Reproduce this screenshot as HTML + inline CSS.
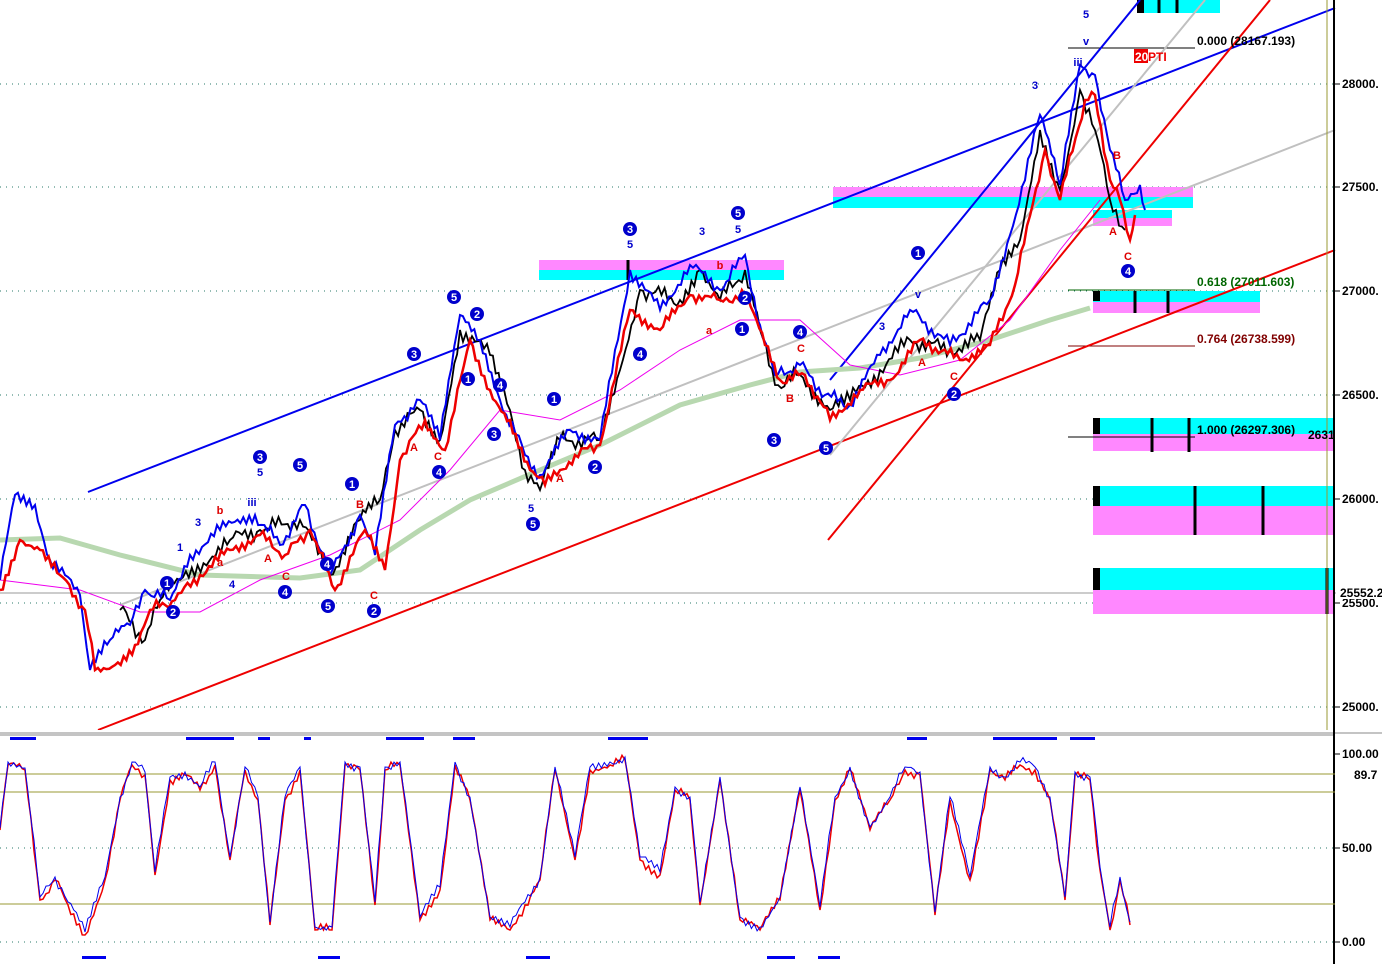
<!DOCTYPE html>
<html><head><meta charset="utf-8"><style>
html,body{margin:0;padding:0;background:#fff;width:1382px;height:964px;overflow:hidden}
svg{display:block;font-family:"Liberation Sans",sans-serif}
</style></head><body>
<svg id="s" width="1382" height="964" viewBox="0 0 1382 964" xmlns="http://www.w3.org/2000/svg">
<rect width="1382" height="964" fill="#fff"/>
<g stroke="#2a7a6a" stroke-width="1" stroke-dasharray="1,5">
<line x1="0" y1="84" x2="1335" y2="84"/><line x1="0" y1="187" x2="1335" y2="187"/>
<line x1="0" y1="291" x2="1335" y2="291"/><line x1="0" y1="395" x2="1335" y2="395"/>
<line x1="0" y1="499" x2="1335" y2="499"/><line x1="0" y1="603" x2="1335" y2="603"/>
<line x1="0" y1="707" x2="1335" y2="707"/>
<line x1="0" y1="848" x2="1335" y2="848"/><line x1="0" y1="942" x2="1335" y2="942"/>
</g>
<line x1="0" y1="593" x2="1382" y2="593" stroke="#999"/>
<rect x="833" y="187" width="360" height="10" fill="#ff88ff"/><rect x="833" y="197" width="360" height="11" fill="#00ffff"/>
<rect x="539" y="260" width="245" height="10" fill="#ff88ff"/><rect x="539" y="270" width="245" height="10" fill="#00ffff"/>
<rect x="1093" y="210" width="79" height="8" fill="#00ffff"/><rect x="1093" y="218" width="79" height="8" fill="#ff88ff"/>
<rect x="1093" y="291" width="167" height="11" fill="#00ffff"/><rect x="1093" y="302" width="167" height="11" fill="#ff88ff"/>
<rect x="1093" y="418" width="242" height="16" fill="#00ffff"/><rect x="1093" y="434" width="242" height="17" fill="#ff88ff"/>
<rect x="1093" y="486" width="242" height="20" fill="#00ffff"/><rect x="1093" y="506" width="242" height="29" fill="#ff88ff"/>
<rect x="1093" y="568" width="242" height="22" fill="#00ffff"/><rect x="1093" y="590" width="242" height="24" fill="#ff88ff"/>
<rect x="1137" y="0" width="83" height="13" fill="#00ffff"/>
<g fill="#000"><rect x="1093" y="418" width="7" height="16"/><rect x="1093" y="486" width="7" height="20"/><rect x="1093" y="568" width="7" height="22"/><rect x="1093" y="291" width="7" height="10"/><rect x="1137" y="0" width="7" height="13"/></g>
<g stroke="#000" stroke-width="3"><line x1="1152" y1="418" x2="1152" y2="452"/><line x1="1189" y1="418" x2="1189" y2="452"/><line x1="1195" y1="486" x2="1195" y2="535"/><line x1="1263" y1="486" x2="1263" y2="535"/><line x1="1135" y1="291" x2="1135" y2="313"/><line x1="1168" y1="291" x2="1168" y2="313"/><line x1="1327" y1="568" x2="1327" y2="614"/><line x1="628" y1="260" x2="628" y2="280"/><line x1="1159" y1="0" x2="1159" y2="13"/><line x1="1177" y1="0" x2="1177" y2="13"/></g>
<line x1="1068" y1="48" x2="1195" y2="48" stroke="#000"/>
<line x1="1068" y1="290" x2="1195" y2="290" stroke="#006600"/>
<line x1="1068" y1="346" x2="1195" y2="346" stroke="#800000"/>
<line x1="1068" y1="437" x2="1195" y2="437" stroke="#000"/>
<line x1="88" y1="492" x2="1335" y2="8" stroke="#0000ee" stroke-width="2"/>
<line x1="98" y1="730" x2="1335" y2="250" stroke="#ee0000" stroke-width="2"/>
<line x1="120" y1="605" x2="1335" y2="130" stroke="#c0c0c0" stroke-width="2"/>
<line x1="828" y1="540" x2="1270" y2="0" stroke="#ee0000" stroke-width="2"/>
<line x1="830" y1="380" x2="1140" y2="0" stroke="#0000ee" stroke-width="2"/>
<line x1="830" y1="455" x2="1205" y2="0" stroke="#c0c0c0" stroke-width="2"/>
<polyline fill="none" stroke="#b8d8b0" stroke-width="5" points="0,540 60,538 120,555 200,575 300,578 360,570 420,530 470,500 540,470 600,445 680,405 750,385 800,372 860,368 920,358 990,340 1050,320 1090,308"/>
<polyline fill="none" stroke="#ee00ee" stroke-width="1" points="0,580 80,590 140,612 200,612 260,580 330,555 400,520 450,470 500,410 560,420 620,390 680,350 740,320 800,320 850,365 900,375 960,360 1010,320 1060,250 1100,200"/>
<polyline class="j" data-a="10" fill="none" stroke="#000" stroke-width="1.8" points="120,610 145,640 160,600 180,580 230,540 260,530 300,520 330,575 360,520 380,500 395,430 420,410 440,440 460,330 490,355 510,410 525,470 540,490 560,440 600,440 620,370 640,290 680,300 700,270 720,300 745,270 760,330 775,385 800,375 830,410 850,400 880,370 910,340 950,350 980,340 1000,270 1020,240 1040,130 1060,190 1080,90 1095,130 1110,200 1125,230"/>
<polyline class="j" data-a="8" fill="none" stroke="#0000ee" stroke-width="2" points="0,580 15,495 35,505 50,560 80,595 90,670 110,640 130,625 145,590 170,600 190,555 220,530 255,515 280,545 305,505 330,575 360,515 375,555 395,425 420,400 440,440 460,315 480,340 500,400 525,455 540,475 570,430 600,440 630,270 660,310 690,265 720,290 745,255 760,325 775,375 800,365 825,395 850,405 880,355 910,310 950,345 990,300 1010,235 1040,115 1060,185 1080,65 1095,75 1110,150 1125,200 1140,185 1145,210"/>
<polyline class="j" data-a="7" fill="none" stroke="#ee0000" stroke-width="2.5" points="0,590 20,540 40,550 60,575 85,610 95,670 115,665 135,645 150,610 175,600 200,575 230,550 260,535 285,555 310,530 335,590 365,530 385,570 400,460 425,420 445,450 470,340 490,390 510,420 530,470 545,485 575,455 600,445 630,310 660,330 690,295 720,300 745,295 765,345 780,380 805,375 830,420 860,390 890,380 920,340 960,360 990,345 1015,285 1045,150 1060,200 1085,100 1095,95 1110,180 1120,200 1130,240 1135,215"/>
<rect x="0" y="730" width="1335" height="4" fill="#fff"/>
<line x1="0" y1="733" x2="1382" y2="733" stroke="#888" stroke-width="1"/>
<line x1="0" y1="735" x2="1335" y2="735" stroke="#888"/>
<line x1="1334" y1="0" x2="1334" y2="964" stroke="#000" stroke-width="2"/>
<line x1="1327" y1="0" x2="1327" y2="730" stroke="#999933"/>
<g stroke="#999933"><line x1="0" y1="774" x2="1335" y2="774"/><line x1="0" y1="792" x2="1335" y2="792"/><line x1="0" y1="904" x2="1335" y2="904"/></g>
<polyline class="j" data-a="6" fill="none" stroke="#ee0000" stroke-width="1.5" points="0,830 8,765 25,770 40,900 55,880 68,905 85,935 105,880 120,800 132,765 145,775 155,875 170,780 185,775 200,790 215,765 230,860 245,770 258,800 270,925 285,800 300,770 315,930 332,930 345,765 360,770 375,905 385,770 400,765 420,920 440,890 455,765 470,800 490,920 510,930 525,905 540,880 555,770 575,860 590,770 610,765 625,760 640,860 660,875 675,790 690,800 700,905 720,780 740,920 760,930 780,900 800,790 820,910 835,800 850,770 870,830 890,800 905,770 920,775 935,915 950,800 970,880 990,770 1005,780 1020,765 1035,770 1050,800 1065,900 1075,775 1090,780 1100,870 1110,930 1120,880 1130,925"/>
<polyline class="j" data-a="6" fill="none" stroke="#0000ee" stroke-width="1" points="0,828 8,762 25,768 40,897 55,877 68,902 85,932 105,877 120,797 132,762 145,772 155,872 170,777 185,772 200,787 215,762 230,857 245,767 258,797 270,922 285,797 300,767 315,927 332,927 345,762 360,767 375,902 385,767 400,762 420,917 440,887 455,762 470,797 490,917 510,927 525,902 540,877 555,767 575,857 590,767 610,762 625,757 640,857 660,872 675,787 690,797 700,902 720,777 740,917 760,927 780,897 800,787 820,907 835,797 850,767 870,827 890,797 905,767 920,772 935,912 950,797 970,877 990,767 1005,777 1020,762 1035,767 1050,797 1065,897 1075,772 1090,777 1100,867 1110,927 1120,877 1130,922"/>
<g fill="#0000ee"><rect x="10" y="737" width="26" height="3"/><rect x="186" y="737" width="48" height="3"/><rect x="258" y="737" width="12" height="3"/><rect x="304" y="737" width="7" height="3"/><rect x="386" y="737" width="38" height="3"/><rect x="453" y="737" width="22" height="3"/><rect x="608" y="737" width="40" height="3"/><rect x="907" y="737" width="20" height="3"/><rect x="993" y="737" width="64" height="3"/><rect x="1070" y="737" width="25" height="3"/><rect x="82" y="956" width="24" height="3"/><rect x="318" y="956" width="22" height="3"/><rect x="526" y="956" width="24" height="3"/><rect x="767" y="956" width="28" height="3"/><rect x="818" y="956" width="22" height="3"/></g>
<g font-size="12" font-weight="bold" fill="#000">
<g stroke="#000"><line x1="1334" y1="84" x2="1340" y2="84"/><line x1="1334" y1="187" x2="1340" y2="187"/><line x1="1334" y1="291" x2="1340" y2="291"/><line x1="1334" y1="395" x2="1340" y2="395"/><line x1="1334" y1="499" x2="1340" y2="499"/><line x1="1334" y1="603" x2="1340" y2="603"/><line x1="1334" y1="707" x2="1340" y2="707"/><line x1="1334" y1="754" x2="1340" y2="754"/><line x1="1334" y1="848" x2="1340" y2="848"/><line x1="1334" y1="942" x2="1340" y2="942"/></g>
<text x="1342" y="88">28000.</text><text x="1342" y="191">27500.</text><text x="1342" y="295">27000.</text><text x="1342" y="399">26500.</text><text x="1342" y="503">26000.</text><text x="1342" y="607">25500.</text><text x="1342" y="711">25000.</text>
<text x="1342" y="758">100.00</text><text x="1342" y="852">50.00</text><text x="1342" y="946">0.00</text>
</g>
<rect x="1336" y="585" width="46" height="14" fill="#fff"/><text x="1340" y="597" font-size="12" font-weight="bold">25552.2</text>
<rect x="1336" y="767" width="46" height="14" fill="#fff"/><text x="1354" y="779" font-size="12" font-weight="bold">89.7</text>
<g font-size="12" font-weight="bold">
<text x="1197" y="45" fill="#000">0.000 (28167.193)</text>
<text x="1197" y="286" fill="#006600">0.618 (27011.603)</text>
<text x="1197" y="343" fill="#800000">0.764 (26738.599)</text>
<text x="1197" y="434" fill="#000">1.000 (26297.306)</text>
<text x="1308" y="439" fill="#000">2631</text>
<rect x="1134" y="49" width="14" height="14" fill="#ee0000"/><text x="1135" y="61" fill="#fff">20</text><text x="1148" y="61" fill="#ee0000">PTI</text>
</g>
<g font-size="11" font-weight="bold" text-anchor="middle">
<g fill="#0000cc">
<circle cx="167" cy="583" r="7"/><circle cx="173" cy="612" r="7"/><circle cx="260" cy="457" r="7"/><circle cx="300" cy="465" r="7"/><circle cx="285" cy="592" r="7"/><circle cx="327" cy="564" r="7"/><circle cx="328" cy="606" r="7"/><circle cx="352" cy="484" r="7"/><circle cx="374" cy="611" r="7"/><circle cx="414" cy="354" r="7"/><circle cx="454" cy="297" r="7"/><circle cx="477" cy="314" r="7"/><circle cx="468" cy="379" r="7"/><circle cx="500" cy="385" r="7"/><circle cx="494" cy="434" r="7"/><circle cx="439" cy="472" r="7"/><circle cx="533" cy="524" r="7"/><circle cx="554" cy="399" r="7"/><circle cx="595" cy="467" r="7"/><circle cx="630" cy="229" r="7"/><circle cx="640" cy="354" r="7"/><circle cx="738" cy="213" r="7"/><circle cx="745" cy="298" r="7"/><circle cx="742" cy="329" r="7"/><circle cx="800" cy="332" r="7"/><circle cx="774" cy="440" r="7"/><circle cx="826" cy="448" r="7"/><circle cx="918" cy="253" r="7"/><circle cx="954" cy="394" r="7"/><circle cx="1128" cy="271" r="7"/>
</g>
<g fill="#fff"><text x="167" y="587">1</text><text x="173" y="616">2</text><text x="260" y="461">3</text><text x="300" y="469">5</text><text x="285" y="596">4</text><text x="327" y="568">4</text><text x="328" y="610">5</text><text x="352" y="488">1</text><text x="374" y="615">2</text><text x="414" y="358">3</text><text x="454" y="301">5</text><text x="477" y="318">2</text><text x="468" y="383">1</text><text x="500" y="389">4</text><text x="494" y="438">3</text><text x="439" y="476">4</text><text x="533" y="528">5</text><text x="554" y="403">1</text><text x="595" y="471">2</text><text x="630" y="233">3</text><text x="640" y="358">4</text><text x="738" y="217">5</text><text x="745" y="302">2</text><text x="742" y="333">1</text><text x="800" y="336">4</text><text x="774" y="444">3</text><text x="826" y="452">5</text><text x="918" y="257">1</text><text x="954" y="398">2</text><text x="1128" y="275">4</text></g>
<g fill="#0000cc"><text x="260" y="476">5</text><text x="630" y="248">5</text><text x="702" y="235">3</text><text x="738" y="233">5</text><text x="1086" y="18">5</text><text x="1086" y="45">v</text><text x="1078" y="66">iii</text><text x="1035" y="89">3</text><text x="882" y="330">3</text><text x="918" y="298">v</text><text x="531" y="512">5</text><text x="198" y="526">3</text><text x="180" y="551">1</text><text x="232" y="588">4</text><text x="252" y="506">iii</text></g>
<g fill="#dd0000"><text x="414" y="451">A</text><text x="438" y="460">C</text><text x="374" y="599">C</text><text x="360" y="508">B</text><text x="720" y="269">b</text><text x="709" y="334">a</text><text x="801" y="352">C</text><text x="790" y="402">B</text><text x="922" y="366">A</text><text x="954" y="380">C</text><text x="1113" y="235">A</text><text x="1117" y="159">B</text><text x="1128" y="260">C</text><text x="220" y="514">b</text><text x="268" y="562">A</text><text x="286" y="580">C</text><text x="560" y="482">A</text><text x="220" y="566">a</text></g>
</g>
</svg>
<script>
document.querySelectorAll('polyline.j').forEach(function(p,k){
  var a=+p.getAttribute('data-a');
  var pts=p.getAttribute('points').trim().split(/\s+/).map(function(s){return s.split(',').map(Number);});
  var out=[];
  for(var i=0;i<pts.length-1;i++){
    var x0=pts[i][0],y0=pts[i][1],x1=pts[i+1][0],y1=pts[i+1][1];
    var n=Math.max(1,Math.round((x1-x0)/3));
    for(var t=0;t<n;t++){
      var x=x0+(x1-x0)*t/n,y=y0+(y1-y0)*t/n;
      if(t>0){y+=a*Math.sin(x*1.7+k*3.1)*Math.cos(x*0.53+k);}
      out.push(x.toFixed(1)+','+y.toFixed(1));
    }
  }
  out.push(pts[pts.length-1].join(','));
  p.setAttribute('points',out.join(' '));
});
</script>
</body></html>
